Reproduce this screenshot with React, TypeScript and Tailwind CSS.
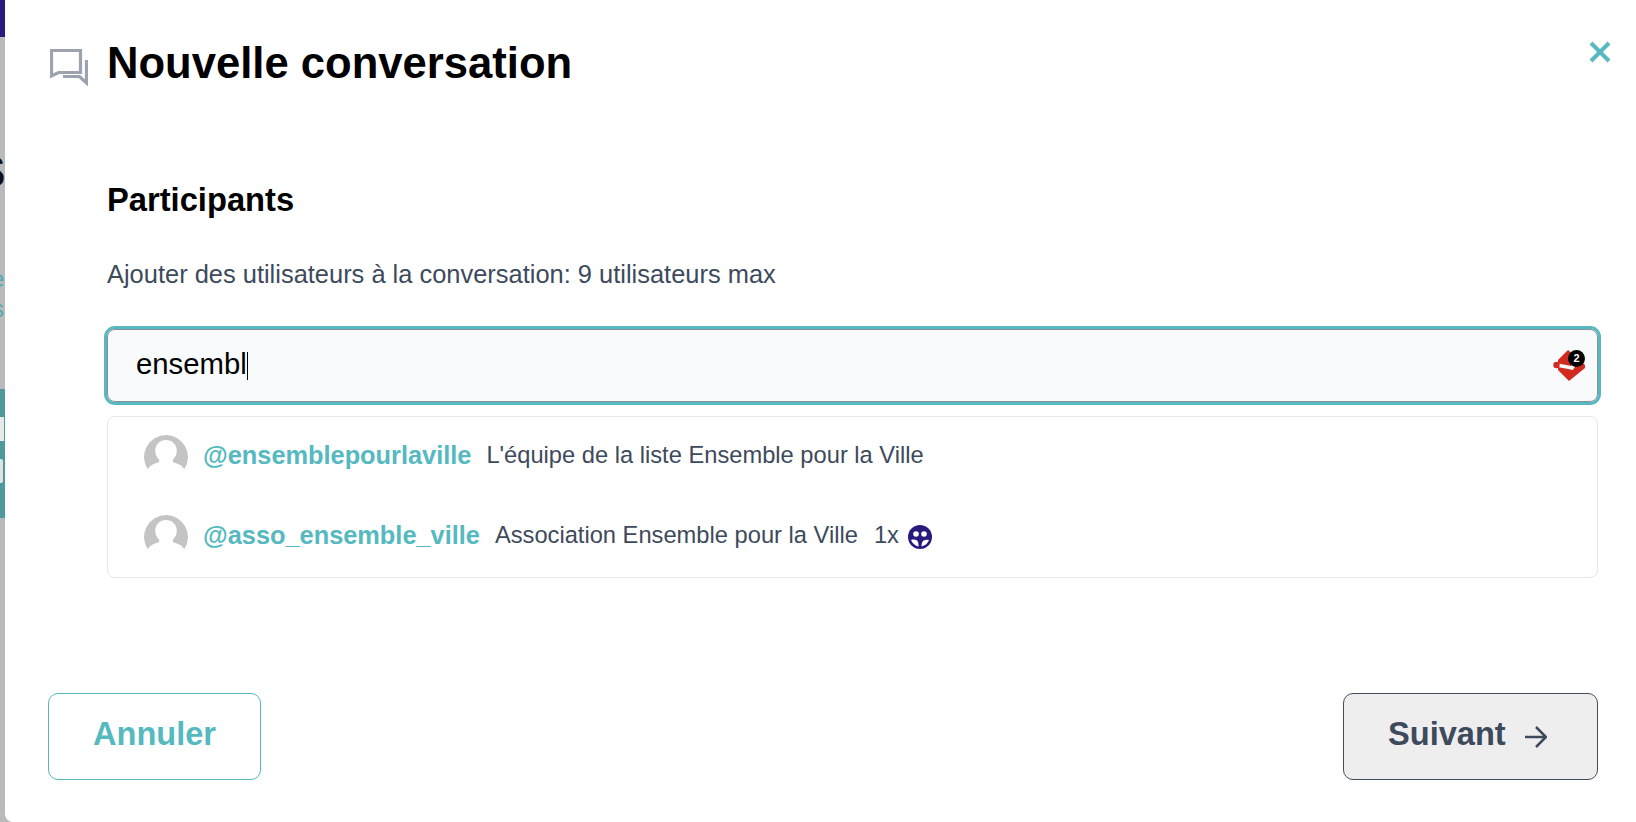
import React from "react";

const Avatar = () => (
  <svg width="44" height="44" viewBox="0 0 44 44" className="shrink-0">
    <path fill="#c4c4c4" d="M22 0a22 22 0 0 1 18.2 34.3c-1.6-2.6-4.2-4.9-8.4-6.200l-2.600-.9-.5-2.500c2.600-2 4.100-5.400 4.100-8.900 0-6.300-4.700-10.800-10.800-10.800S11.200 9.500 11.200 15.800c0 3.500 1.500 6.900 4.100 8.900l-.5 2.500-2.600.9c-4.200 1.300-6.800 3.600-8.400 6.200A22 22 0 0 1 22 0z" />
  </svg>
);

const GroupBadge = () => (
  <svg width="24" height="24" viewBox="0 0 24 24" className="shrink-0">
    <circle cx="12" cy="12" r="12" fill="#2a1a7c" />
    <circle cx="8" cy="9" r="2.800" fill="#fff" />
    <circle cx="16" cy="9" r="2.800" fill="#fff" />
    <path d="M3 15c2-.8 4.500-.6 6 .5 1.200 1 1.600 3 1.500 6-3.200-.6-6-3-7.500-6.500z" fill="#fff" />
    <path d="M13.500 21.500c0-3 .6-5 2.200-6 1.800-1 3.500-1 5.300-.4-1.200 3.200-3.800 5.800-7.500 6.400z" fill="#fff" />
  </svg>
);

const LeftStrip = () => (
  <div className="w-[5px] shrink-0 h-full flex flex-col bg-[#b9babc] overflow-hidden">
    <div className="h-[37px] bg-[#2a1a7c]" />
    <div className="h-[112px]" />
    <div className="h-[46px] w-[5px] overflow-hidden">
      <span className="block -ml-[24px] text-[44px] leading-[46px] font-bold text-[#111111]">S</span>
    </div>
    <div className="h-[72px]" />
    <div className="h-[24px] w-[5px] overflow-hidden">
      <span className="block -ml-[9px] text-[24px] leading-[24px] text-[#55a8ad]">e</span>
    </div>
    <div className="h-[6px]" />
    <div className="h-[24px] w-[5px] overflow-hidden">
      <span className="block -ml-[8px] text-[24px] leading-[24px] text-[#55a8ad]">s</span>
    </div>
    <div className="h-[68px]" />
    <div className="h-[129px] bg-[#4f999e] flex flex-col pt-[28px] gap-[18px]">
      <div className="h-[24px] w-[4px] bg-[#e8eaea]" />
      <div className="h-[24px] w-[3px] rounded-r-[2px] bg-[#dfe3e3]" />
    </div>
  </div>
);

export default function App() {
  return (
    <div className="w-full h-[822px] flex bg-[#b9babc] overflow-hidden font-['Liberation_Sans',Arial,sans-serif]">
      <LeftStrip />
      <div className="flex-1 h-full bg-white rounded-bl-[8px] flex flex-col relative pl-[43px] pr-[38px]">
        <header className="flex items-start h-[128px] pt-[37px]">
          <svg width="38" height="37" viewBox="0 0 38 37" fill="none" className="ml-[2px] mt-[12px] shrink-0 text-[#9ca3af]" stroke="currentColor" strokeWidth="3.200">
            <path d="M1.500 27V1.500h29v22H8.500z" />
            <path d="M36.500 11v23l-7-6.500H13" />
          </svg>
          <h1 className="ml-[19px] text-[43.6px] leading-[52px] font-bold text-black">Nouvelle conversation</h1>
        </header>
        <button className="absolute right-[24px] top-[40px] text-[#55b9bf]" aria-label="Fermer">
          <svg width="24" height="24" viewBox="0 0 24 24" stroke="currentColor" strokeWidth="4" fill="none">
            <path d="M3 3l18 18M21 3L3 21" />
          </svg>
        </button>
        <section className="pl-[59px] flex flex-col">
          <h2 className="mt-[50px] text-[32.700px] leading-[44px] font-bold text-black">Participants</h2>
          <p className="mt-[36px] text-[25.450px] leading-[32px] text-[#3d4a5c]">Ajouter des utilisateurs à la conversation: 9 utilisateurs max</p>
          <div className="mt-[36px] -mx-[3px] h-[79px] rounded-[11px] border-[3px] border-[#55b9bf] flex">
            <div className="flex-1 rounded-[8px] border border-[#8a8f98] bg-[#f9fafb] flex items-center pl-[28px] pr-[12px]">
              <span className="text-[29.300px] leading-[36px] text-black -mt-[3px]">ensembl</span>
              <span className="w-px h-[28px] bg-black" />
              <span className="ml-auto relative w-[32px] h-[32px]">
                <svg width="32" height="32" viewBox="0 0 32 32" className="absolute left-0 top-0">
                  <path d="M15 0l17 15v3L16 31 5 20V10z" fill="#d12a20" />
                  <path d="M4 15l15 3 3-5" fill="none" stroke="#f9fafb" strokeWidth="3.500" />
                  <circle cx="3.500" cy="15" r="3.200" fill="#d12a20" />
                </svg>
                <span className="absolute left-[15px] top-0 w-[17px] h-[17px] rounded-full bg-black text-white text-[11px] leading-[17px] font-bold text-center">2</span>
              </span>
            </div>
          </div>
          <ul className="mt-[11px] rounded-[8px] border border-[#e5e7eb] h-[162px] pl-[36px] pt-[18px] flex flex-col gap-[36px]">
            <li className="flex items-center h-[44px] text-[23.700px]">
              <Avatar />
              <span className="ml-[15px] font-bold text-[25.350px] text-[#55b9bf] -mt-[3px]">@ensemblepourlaville</span>
              <span className="ml-[15px] text-[#3d4a5c] -mt-[3px]">L'équipe de la liste Ensemble pour la Ville</span>
            </li>
            <li className="flex items-center h-[44px] text-[23.700px]">
              <Avatar />
              <span className="ml-[15px] font-bold text-[25.350px] text-[#55b9bf] -mt-[3px]">@asso_ensemble_ville</span>
              <span className="ml-[15px] text-[#3d4a5c] -mt-[3px]">Association Ensemble pour la Ville</span>
              <span className="ml-[16px] text-[#3d4a5c] -mt-[3px]">1x</span>
              <span className="ml-[9px]"><GroupBadge /></span>
            </li>
          </ul>
        </section>
        <footer className="flex justify-between mt-[115px]">
          <button className="w-[213px] h-[87px] pb-[4px] rounded-[10px] border border-[#55b9bf] bg-white text-[#55b9bf] text-[32.600px] font-bold">Annuler</button>
          <button className="w-[255px] h-[87px] pb-[4px] rounded-[10px] border border-[#414e5e] bg-[#eeeeee] text-[#3d4a5c] text-[32.600px] font-bold flex items-center pl-[44px] gap-[19px]">
            Suivant
            <svg width="22" height="22" viewBox="0 0 22 22" fill="none" stroke="currentColor" strokeWidth="2.500" className="mt-[4px]">
              <path d="M0 11h20M11 1l10 10-10 10" />
            </svg>
          </button>
        </footer>
      </div>
    </div>
  );
}
